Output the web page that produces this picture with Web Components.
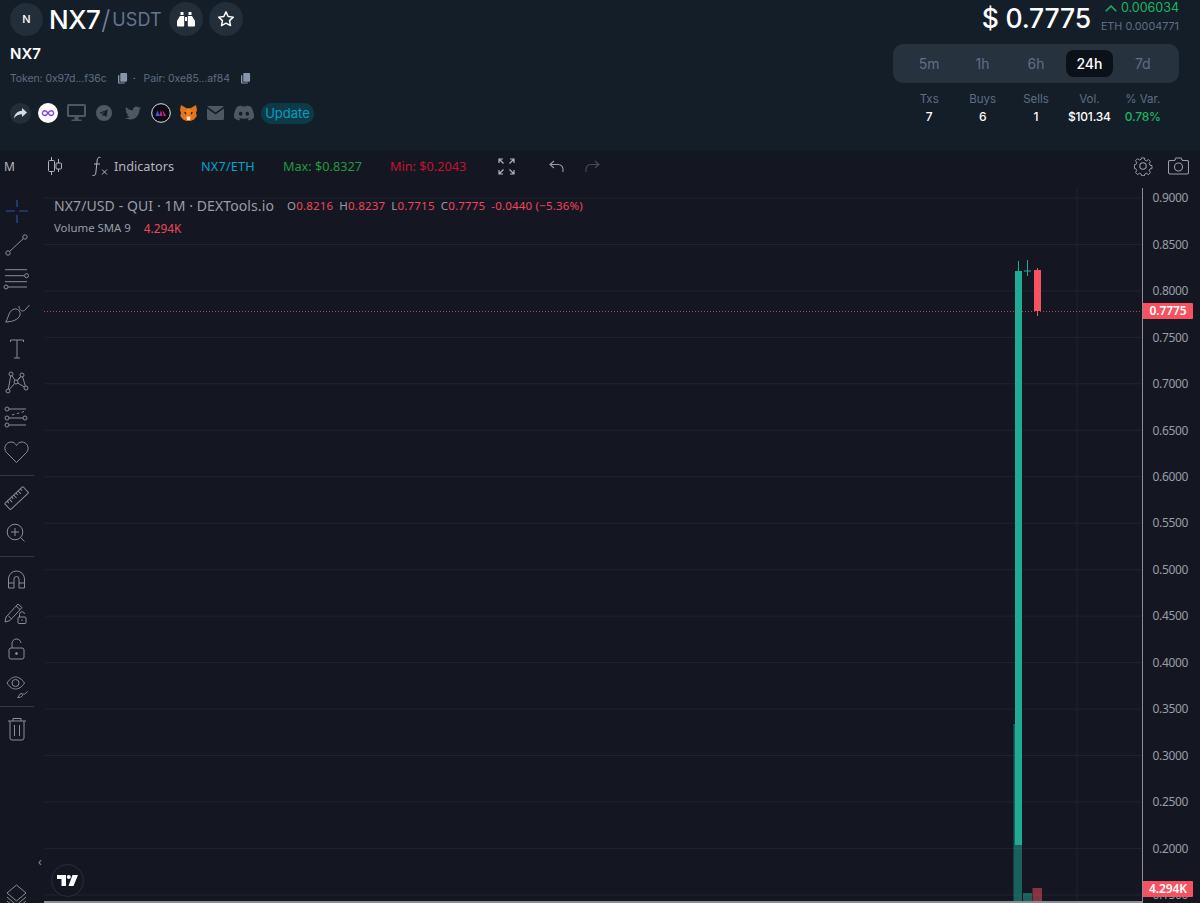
<!DOCTYPE html>
<html lang="en"><head><meta charset="utf-8"><title>NX7/USDT</title>
<style>
html,body{margin:0;padding:0;height:903px;overflow:hidden;background:#141722}
</style></head><body>
<dex-app></dex-app>
<script>
const def=(n,html,extra)=>{customElements.define(n,class extends HTMLElement{constructor(){super();this.attachShadow({mode:'open'}).innerHTML=html;}connectedCallback(){extra&&extra(this.shadowRoot,this)}})};

def('round-btn',`<style>:host{display:flex;align-items:center;justify-content:center;width:var(--s,34px);height:var(--s,34px);border-radius:50%;background:#222e3a;color:#fff;flex:none;font:500 11px Inter,sans-serif}</style><slot></slot>`);

def('pair-title',`<style>
:host{display:flex;align-items:center;height:38px;font-family:Inter,sans-serif}
.n{font-size:26px;font-weight:500;color:#fff;margin-left:6px;letter-spacing:-.5px}
.s{font-size:26px;font-weight:300;color:#7185a0;margin:0 2px 0 1px}
.u{font-size:18px;font-weight:400;color:#64758f;letter-spacing:.1px;margin-right:7px}
round-btn+round-btn{margin-left:6px}
</style>
<round-btn style="--s:33px">N</round-btn><span class="n">NX7</span><span class="s">/</span><span class="u">USDT</span>
<round-btn><svg width="18" height="16" viewBox="0 0 18 16" fill="#fff"><path d="M3.500 1h3v3h-3zM11.500 1h3v3h-3zM3 5h4.200v9.500a1 1 0 0 1-1 1H1a1 1 0 0 1-1-1V10zM10.800 5H15l3 5v4.500a1 1 0 0 1-1 1h-5.200a1 1 0 0 1-1-1zM8 6h2v4H8z"/></svg></round-btn>
<round-btn><svg width="18" height="18" viewBox="0 0 24 24" fill="none" stroke="#fff" stroke-width="2" stroke-linejoin="round"><path d="M12 2.500l2.900 6.200 6.800.8-5 4.600 1.300 6.700-6-3.300-6 3.300 1.300-6.700-5-4.600 6.800-.8z"/></svg></round-btn>`);

const copy=`<svg width="10" height="11" viewBox="0 0 11 12" fill="#8695ab"><path d="M3.500 0H9a1 1 0 0 1 1 1v7.500a1 1 0 0 1-1 1H3.500a1 1 0 0 1-1-1V1a1 1 0 0 1 1-1z"/><path d="M1.500 2.500v8h6v1H1a1 1 0 0 1-1-1v-8z"/></svg>`;
def('token-line',`<style>
:host{display:flex;align-items:center;font:400 10.500px Inter,sans-serif;color:#5f6d86;height:16px;letter-spacing:-.1px}
svg{margin-left:11px}
.d{margin:0 8px 0 5px;color:#8695ab}
</style><span>Token: 0x97d...f36c</span>${copy}<span class="d">·</span><span>Pair: 0xe85...af84</span>${copy}`);

def('social-row',`<style>
:host{display:flex;align-items:center;height:22px;gap:0}
svg{display:block;flex:none}
.p{font:400 13px Inter,sans-serif;color:#0a9cc0;background:#0d3a47;border-radius:10px;height:21px;width:53px;display:flex;align-items:center;justify-content:center;margin-left:7px}
</style>
<round-btn style="--s:21px"><svg width="13" height="11" viewBox="0 0 13 11" fill="#d8dde3"><path d="M8 0l5 4.500-5 4.500V6.300C4.500 6.300 2 7.500 0 10.500 .5 6 3 3.200 8 2.700z"/></svg></round-btn>
<svg style="margin-left:7px" width="20" height="20" viewBox="0 0 20 20"><circle cx="10" cy="10" r="10" fill="#fff"/><path d="M10 10c-1-1.300-1.700-2.300-3.200-2.300a2.400 2.400 0 1 0 0 4.800c1.500 0 2.200-1 3.200-2.500s1.700-2.300 3.200-2.300a2.400 2.400 0 1 1 0 4.800c-1.500 0-2.200-1-3.200-2.500z" fill="none" stroke="#8247e5" stroke-width="1.400"/></svg>
<svg style="margin-left:9px" width="19" height="18" viewBox="0 0 19 18" fill="#4c5864"><path fill-rule="evenodd" d="M1.500 0h16A1.500 1.500 0 0 1 19 1.500v10a1.500 1.500 0 0 1-1.500 1.500h-16A1.500 1.500 0 0 1 0 11.500v-10A1.500 1.500 0 0 1 1.500 0zM2 2v9h15V2z"/><path d="M7.500 13h4v3h-4zM4.500 15.500h10V17h-10z"/></svg>
<svg style="margin-left:10px" width="16" height="16" viewBox="0 0 16 16"><circle cx="8" cy="8" r="8" fill="#4c5864"/><path d="M3 8l8.800-3.500-1.400 7.500-2.600-1.900-1.300 1.300-.2-2.400 3.600-3.100-4.500 2.700z" fill="#141e28"/></svg>
<svg style="margin-left:12px" width="18" height="16" viewBox="0 0 24 24" fill="#4c5864"><path d="M23.953 4.570a10 10 0 01-2.825.775 4.958 4.958 0 002.163-2.723c-.951.555-2.005.959-3.127 1.184a4.920 4.920 0 00-8.384 4.482C7.690 8.095 4.067 6.130 1.640 3.162a4.822 4.822 0 00-.666 2.475c0 1.710.870 3.213 2.188 4.096a4.904 4.904 0 01-2.228-.616v.060a4.923 4.923 0 003.946 4.827 4.996 4.996 0 01-2.212.085 4.936 4.936 0 004.604 3.417 9.867 9.867 0 01-6.102 2.105c-.390 0-.779-.023-1.170-.067a13.995 13.995 0 007.557 2.209c9.053 0 13.998-7.496 13.998-13.985 0-.210 0-.420-.015-.630A9.935 9.935 0 0024 4.590z"/></svg>
<svg style="margin-left:9px" width="20" height="20" viewBox="0 0 20 20"><circle cx="10" cy="10" r="9.300" fill="#0a0a12" stroke="#e4e4e8" stroke-width="1"/><path d="M4.500 13l2.300-6 1.300 6z" fill="#3d5bf0"/><path d="M8 13l2-6 1.500 6z" fill="#d0149e"/><path d="M11.500 7l3.500 6h-2z" fill="#e63b7a"/></svg>
<svg style="margin-left:9px" width="17" height="16" viewBox="0 0 17 16"><path d="M1 0l6 3.500h3L16 0l1 5-1 3 .8 3-2.800 3.500L10.500 16h-4L3 14.500.2 11 1 8 0 5z" fill="#e2761b"/><path d="M4 7l3 .5-1.500 2zM13 7l-3 .5 1.500 2z" fill="#2b1a0e"/><path d="M6.500 11.500h4L10 15H7z" fill="#f5e3d3"/><path d="M7 3.500h3l1 4-2.500 3L6 7.500z" fill="#f6851b"/></svg>
<svg style="margin-left:10px" width="17" height="14" viewBox="0 0 17 14" fill="#4c5864"><path d="M1.500 0h14c.6 0 1 .2 1.300.6L8.500 6.500.2.600C.5.200.9 0 1.500 0z"/><path d="M0 2.500l8.500 6 8.500-6v10a1.500 1.500 0 0 1-1.500 1.500h-14A1.500 1.500 0 0 1 0 12.500z"/></svg>
<svg style="margin-left:10px" width="20" height="20" viewBox="0 0 24 24" fill="#4c5864"><path d="M20.317 4.370a19.790 19.790 0 0 0-4.885-1.515.074.074 0 0 0-.079.037c-.210.375-.444.864-.608 1.250a18.270 18.270 0 0 0-5.487 0 12.640 12.640 0 0 0-.617-1.250.077.077 0 0 0-.079-.037A19.740 19.740 0 0 0 3.677 4.370a.070.070 0 0 0-.032.027C.533 9.046-.320 13.580.099 18.057a.082.082 0 0 0 .031.057 19.900 19.900 0 0 0 5.993 3.030.078.078 0 0 0 .084-.028c.462-.630.874-1.295 1.226-1.994a.076.076 0 0 0-.041-.106 13.107 13.107 0 0 1-1.872-.892.077.077 0 0 1-.008-.128 10.200 10.200 0 0 0 .372-.292.074.074 0 0 1 .077-.010c3.928 1.793 8.180 1.793 12.062 0a.074.074 0 0 1 .078.010c.120.098.246.198.373.292a.077.077 0 0 1-.006.127 12.299 12.299 0 0 1-1.873.892.077.077 0 0 0-.041.107c.360.698.772 1.362 1.225 1.993a.076.076 0 0 0 .084.028 19.839 19.839 0 0 0 6.002-3.030.077.077 0 0 0 .032-.054c.500-5.177-.838-9.674-3.549-13.660a.061.061 0 0 0-.031-.030zM8.020 15.330c-1.183 0-2.157-1.085-2.157-2.419 0-1.333.956-2.419 2.157-2.419 1.210 0 2.176 1.096 2.157 2.420 0 1.333-.956 2.418-2.157 2.418zm7.975 0c-1.183 0-2.157-1.085-2.157-2.419 0-1.333.955-2.419 2.157-2.419 1.210 0 2.176 1.096 2.157 2.420 0 1.333-.946 2.418-2.157 2.418z"/></svg>
<span class="p">Update</span>`);

def('pair-info',`<style>
:host{display:flex;flex-direction:column;padding-left:10px}
.name{font:600 15px Inter,sans-serif;color:#fff;margin-top:6px;height:20px;line-height:20px}
token-line{margin-top:6px}
social-row{margin-top:16px}
</style>
<pair-title></pair-title><div class="name">NX7</div><token-line></token-line><social-row></social-row>`);

def('period-tabs',`<style>
:host{display:grid;grid-template-columns:repeat(5,1fr);align-items:center;height:39px;width:267px;padding:0 9.500px;background:#27323f;border-radius:10px;font:400 14px Inter,sans-serif;color:#5e6e87;text-align:center}
.a{background:#0b1118;color:#fff;font-weight:500;border-radius:8px;height:27px;line-height:27px;margin:0 3.500px}
</style><span>5m</span><span>1h</span><span>6h</span><span class="a">24h</span><span>7d</span>`);

def('stat-grid',`<style>
:host{display:grid;grid-template-columns:repeat(5,1fr);width:267px;padding:0 9.500px;font:400 11.500px/17px Inter,sans-serif;text-align:center;color:#5e6e87}
b{font-weight:500;color:#fff;font-size:12px;letter-spacing:-.2px}
.g{color:#16b85f}
</style>
<span>Txs</span><span>Buys</span><span>Sells</span><span>Vol.</span><span>% Var.</span>
<b>7</b><b>6</b><b>1</b><b>$101.34</b><b class="g">0.78%</b>`);

def('price-box',`<style>
:host{display:flex;flex-direction:column;align-items:flex-end;width:286px;padding-right:21px}
.top{display:flex;align-items:flex-start;height:37px}
.p{font:500 26.500px/36px Inter,sans-serif;color:#fff;letter-spacing:-.2px;margin-right:10px}
.c{display:flex;flex-direction:column;align-items:flex-end;font:400 12.500px/16px Inter,sans-serif;color:#16b85f;}
.e{font-size:10.800px;color:#5e6e87;line-height:22px}
.r{display:flex;align-items:center;gap:4px}
period-tabs{margin-top:7px}
stat-grid{margin-top:8px}
</style>
<div class="top"><span class="p">$ 0.7775</span><div class="c"><span class="r"><svg width="12" height="7" viewBox="0 0 12 7" fill="none" stroke="#16b85f" stroke-width="1.500"><path d="M.7 6.300L6 1l5.300 5.300"/></svg>0.006034</span><span class="e">ETH 0.0004771</span></div></div>
<period-tabs></period-tabs><stat-grid></stat-grid>`);

def('pair-header',`<style>
:host{display:flex;justify-content:space-between;height:150px;background:#141e28;box-sizing:border-box}
</style><pair-info></pair-info><price-box></price-box>`);

const tvFont=`"Noto Sans",sans-serif`;
def('chart-toolbar',`<style>
:host{display:flex;align-items:center;height:38px;box-sizing:border-box;padding-bottom:6px;background:#141722;font:400 12.700px ${tvFont};color:#b2b5be}
svg{display:block;flex:none}
.m{margin-left:4px;width:43px;font-size:12px;font-weight:400}
.sp{flex:1}
.e{color:#00a5c8;margin-left:27px;letter-spacing:.2px}
.x{color:#1f9b3c;margin-left:28px}
.n{color:#c0142f;margin-left:28px}
.i{margin-left:6px}
</style>
<span class="m">M</span>
<svg width="16" height="20" viewBox="0 0 16 20" fill="none" stroke="#b2b5be"><path d="M4.500 1v3M4.500 16v3M11.500 3v4M11.500 13v3"/><rect x="1.500" y="4.500" width="6" height="11" rx="1"/><rect x="9" y="7" width="5.500" height="6" rx="1"/></svg>
<svg style="margin-left:29px" width="16" height="21" viewBox="0 0 16 21" fill="none" stroke="#b2b5be"><path d="M8.500 1.500C6.500.8 5.500 2 5.200 4L3.800 17c-.3 2-1.300 3-3.300 2.500M2 8h6M10 13.500l5 5M15 13.500l-5 5"/></svg>
<span class="i">Indicators</span><span class="e">NX7/ETH</span><span class="x">Max: $0.8327</span><span class="n">Min: $0.2043</span>
<svg style="margin-left:32px" width="17" height="17" viewBox="0 0 17 17" fill="none" stroke="#b2b5be" stroke-width="1.200"><path d="M1 5V1h4M1 1l4.500 4.500M12 1h4v4M16 1l-4.500 4.500M1 12v4h4M1 16l4.500-4.500M16 12v4h-4M16 16l-4.500-4.500"/></svg>
<svg style="margin-left:34px" width="15" height="12" viewBox="0 0 15 12" fill="none" stroke="#9a9da6" stroke-width="1.100"><path d="M5 1L1 4.500 5 8M1 4.500h8c3 0 5 2 5 5V12"/></svg>
<svg style="margin-left:21px" width="15" height="12" viewBox="0 0 15 12" fill="none" stroke="#4a4d58" stroke-width="1.100"><path d="M10 1l4 3.500L10 8M14 4.500H6c-3 0-5 2-5 5V12"/></svg>
<span class="sp"></span>
<svg width="20" height="20" viewBox="0 0 20 20" fill="none" stroke="#9a9da6" stroke-width="1.100"><circle cx="10" cy="10" r="3.200"/><path d="M8.400 1h3.200l.5 2.500 1.800.8 2.200-1.400 2.200 2.200-1.400 2.200.8 1.800 2.300.5v3.200l-2.300.5-.8 1.800 1.400 2.200-2.200 2.200-2.200-1.400-1.800.8-.5 1.900H8.400l-.5-1.900-1.800-.8-2.200 1.400-2.200-2.200 1.400-2.200-.8-1.800-1.800-.5V8.600l1.800-.5.8-1.800-1.400-2.200 2.200-2.200 2.200 1.400 1.800-.8z" transform="translate(1 1) scale(.9)"/></svg>
<svg style="margin:0 11px 0 15px" width="21" height="18" viewBox="0 0 21 18" fill="none" stroke="#9a9da6" stroke-width="1.100"><path d="M2 3.500h4.500L8 1h5l1.500 2.500H19a1.500 1.500 0 0 1 1.500 1.500v10.500A1.500 1.500 0 0 1 19 17H2A1.500 1.500 0 0 1 .5 15.500V5A1.500 1.500 0 0 1 2 3.500z"/><circle cx="10.500" cy="10" r="4"/></svg>`);

const ic={
cross:`<path d="M6 17h9M19 17h9M17 6v7M17 21v8" stroke="#2a50a8" stroke-width="1.200"/>`,
line:`<circle cx="25" cy="9" r="2.200"/><circle cx="8" cy="25" r="2.200"/><path d="M23.400 10.600L9.600 23.400"/>`,
lines:`<path d="M5 6.700h22M5 12.700h19M5 18.700h22M8 24h19"/><circle cx="26.500" cy="12.700" r="2"/><circle cx="6" cy="24" r="2"/>`,
brush:`<path d="M5.500 25C8 23 8 15 13 12.500c4-2 8 1.500 7 5.500-1 4.500-8 7-14.500 7z"/><path d="M19 9c0 4 3 6 5.500 4.500L29.500 8"/>`,
text:`<path d="M10.500 10V8h13v2M17 8v18M14 26h6"/>`,
node:`<path d="M11 8l5 8 6-7 4 13M16 16l-8 9M11 8L8 25M22 9l-6 7 10 6"/><circle cx="11" cy="8" r="2" fill="#141722"/><circle cx="22" cy="9" r="2" fill="#141722"/><circle cx="16" cy="16" r="2" fill="#141722"/><circle cx="8" cy="25" r="2" fill="#141722"/><circle cx="26" cy="22" r="2" fill="#141722"/>`,
fib:`<circle cx="7" cy="9" r="2"/><path d="M9 9h17M9 18h14M9 25h17"/><circle cx="7" cy="18" r="2"/><circle cx="25" cy="18" r="2"/><circle cx="7" cy="25" r="2"/><path d="M12 15l14-4" stroke-dasharray="2.500 2.500"/>`,
heart:`<path d="M16.500 27.500L6.500 17.500C2.500 12.500 6.500 7 11 7c3 0 4.700 2 5.500 3.500C17.300 9 19 7 22 7c4.500 0 8.500 5.500 4.500 10.500z"/>`,
ruler:`<g transform="rotate(-43 16.500 17)"><rect x="4" y="13" width="25" height="8.500" rx="1"/><path d="M7.500 13v2.500M10.500 13v4M13.500 13v2.500M16.500 13v4M19.500 13v2.500M22.500 13v4M25.500 13v2.500"/></g>`,
zoom:`<circle cx="15" cy="16" r="7.800"/><path d="M15 12v8M11 16h8M20.700 21.500l3.800 4"/>`,
magnet:`<path d="M8.500 26V17a8 8 0 0 1 16 0v9h-5.500v-9a2.500 2.500 0 0 0-5 0v9zM8.500 21H14M19 21h5.500"/>`,
pencil:`<path d="M6 21L18 8l4 3.500-12 13-5 1.500z M16 10l4 3.500M8 19.500l3.500 3.500"/><rect x="18" y="21" width="8" height="6.500" rx="1"/><path d="M19.500 21v-2.500a2.500 2.500 0 0 1 5-.5M22 23.500v1.500"/>`,
lock:`<g transform="translate(0 2)"><rect x="9" y="15" width="15" height="11" rx="2"/><path d="M12 15v-4a4.500 4.500 0 0 1 9-1"/><circle cx="16.500" cy="20.500" r="1" fill="#8a8d98"/></g>`,
eye:`<g transform="translate(0 3)"><path d="M7 15c3-4.500 6-6 8.500-6s6 1.500 9 6c-3 4.500-6 6-9 6s-5.500-1.500-8.500-6z"/><circle cx="15.500" cy="15" r="3.500"/><path d="M17.500 29.500c1.500-.5 1.500-3.500 3.500-4 1.500 0 2 1 1.500 2-.5 1.500-3 2-5 2zM23 25.500c.5 1 1.500 1 2.500 0l2-2"/></g>`,
trash:`<path d="M8 8h18M13 8V5.500h8V8M10 8v17a2 2 0 0 0 2 2h10a2 2 0 0 0 2-2V8M14.500 12v11M19.500 12v11"/>`,
layers:`<path d="M16.500 6L26 14l-9.500 8L7 14zM7 18l9.500 8 9.500-8M7 22l9.500 8 9.500-8"/>`
};
def('tool-icon',`<style>:host{display:block;width:34px;height:34.400px}svg{display:block;overflow:visible}</style><svg width="34" height="34" viewBox="0 0 34 34" fill="none" stroke="#8a8d98" stroke-width="1"></svg>`,(r,h)=>{r.querySelector('svg').innerHTML=ic[h.getAttribute('name')]||''});

def('tool-rail',`<style>
:host{display:flex;flex-direction:column;position:relative;width:44px;flex:none;box-sizing:border-box;padding-top:6px;background:#141722;height:715px}
i{display:block;height:1px;width:34px;background:#363944;margin:6px 0 5px}
.b{margin-top:auto;margin-bottom:-10px}
.col{position:absolute;left:38px;top:664px;color:#8a8d98;font:400 12px ${tvFont};line-height:20px}
</style>
<tool-icon name="cross"></tool-icon><tool-icon name="line"></tool-icon><tool-icon name="lines"></tool-icon><tool-icon name="brush"></tool-icon><tool-icon name="text"></tool-icon><tool-icon name="node"></tool-icon><tool-icon name="fib"></tool-icon><tool-icon name="heart"></tool-icon>
<i></i><tool-icon name="ruler"></tool-icon><tool-icon name="zoom"></tool-icon>
<i></i><tool-icon name="magnet"></tool-icon><tool-icon name="pencil"></tool-icon><tool-icon name="lock"></tool-icon><tool-icon name="eye"></tool-icon>
<i style="margin:7px 0 6px"></i><tool-icon name="trash"></tool-icon>
<tool-icon class="b" name="layers"></tool-icon><span class="col">‹</span>`);

def('chart-legend',`<style>
:host{display:block;position:absolute;left:10px;top:8px;font:400 11.400px ${tvFont};color:#9a9da6;white-space:nowrap}
.a{display:flex;align-items:center;height:19px;font-size:14px;letter-spacing:.1px}
.o{display:flex;margin-left:13px;font-size:11.500px;letter-spacing:.2px;color:#f0455a}
.o span{margin-right:6px}.o b{font-weight:400;color:#9a9da6}
.v{display:flex;height:19px;margin-top:3px;align-items:center}
.v em{font-style:normal;color:#f0455a;margin-left:13px;font-size:11.800px}
</style>
<div class="a"><span>NX7/USD - QUI · 1M · DEXTools.io</span><div class="o"><span><b>O</b>0.8216</span><span><b>H</b>0.8237</span><span><b>L</b>0.7715</span><span><b>C</b>0.7775</span><span>-0.0440 (−5.36%)</span></div></div>
<div class="v"><span>Volume SMA 9</span><em>4.294K</em></div>`);

def('chart-canvas',`<style>
:host{display:block;position:relative;width:1098px;height:715px;overflow:hidden}
svg{display:block}
.logo{position:absolute;left:7px;top:676px;border:1px solid #2a2e39;border-radius:50%;display:flex;align-items:center;justify-content:center;box-sizing:border-box;width:33px;height:33px;background:#141722}
</style>
<svg width="1098" height="715" viewBox="44 188 1098 715"></svg>
<div class="logo"><svg width="21" height="11" viewBox="0 0 21 11" fill="#fff"><path d="M0 0h9v11H4.500V4H0z"/><circle cx="11.800" cy="2" r="2"/><path d="M15.500 0H21l-4.500 11h-5z"/></svg></div>
<chart-legend></chart-legend>`,(r)=>{
 let s='';
 for(let i=0;i<16;i++){const y=198+46.46*i;s+=`<path d="M45 ${y.toFixed(1)}H1142" stroke="#21242f"/>`;}
 s+=`<path d="M1077 188V903" stroke="#21242f"/>`;
 s+=`<path d="M44 311.500H1142" stroke="#f7525f" stroke-dasharray="1 2" opacity=".75"/>`;
 s+=`<path d="M1018.500 261V271" stroke="#22ab94"/><rect x="1015" y="271" width="7" height="574" fill="#22ab94"/>`;
 s+=`<path d="M1027.500 260V276M1024 271H1031" stroke="#22ab94"/>`;
 s+=`<path d="M1037.500 268V316" stroke="#f7525f"/><rect x="1034" y="270" width="7" height="41" fill="#f7525f"/>`;
 s+=`<rect x="1013.500" y="724" width="8.500" height="178" fill="#22ab94" fill-opacity=".5"/><rect x="1023" y="893" width="9" height="9" fill="#22ab94" fill-opacity=".5"/><rect x="1032.500" y="888" width="9.500" height="14" fill="#f7525f" fill-opacity=".5"/>`;
 s+=`<rect x="44" y="901" width="1098" height="2" fill="#8a8d98"/>`;
 r.querySelector('svg').innerHTML=s;
});

def('price-axis',`<style>
:host{display:block;position:relative;flex:1;border-left:1px solid #8a8d98;height:715px;overflow:hidden;font:400 12px ${tvFont};color:#9a9da6;box-sizing:border-box}
.l{margin-top:-12.700px}
.l div{height:46.460px;line-height:46.460px;padding-left:9.500px;letter-spacing:-.35px}
.t{position:absolute;left:0;width:50px;height:16px;line-height:16px;background:#f7525f;color:#fff;font-weight:600;text-align:center;border-radius:0 1px 1px 0;letter-spacing:-.1px}
</style>
<div class="l"></div>
<span class="t" style="top:115px">0.7775</span><span class="t" style="top:693px">4.294K</span>`,(r)=>{
 r.querySelector('.l').innerHTML=[9,8.5,8,7.5,7,6.5,6,5.5,5,4.5,4,3.5,3,2.5,2,1.5].map(v=>`<div>${(v/10).toFixed(4)}</div>`).join('');
});

def('chart-main',`<style>:host{display:flex;height:715px;background:#141722}</style><tool-rail></tool-rail><chart-canvas></chart-canvas><price-axis></price-axis>`);

def('dex-app',`<style>:host{display:block;width:1200px;height:903px;overflow:hidden;background:#141722}</style><pair-header></pair-header><chart-toolbar></chart-toolbar><chart-main></chart-main>`);
</script>
</body></html>
